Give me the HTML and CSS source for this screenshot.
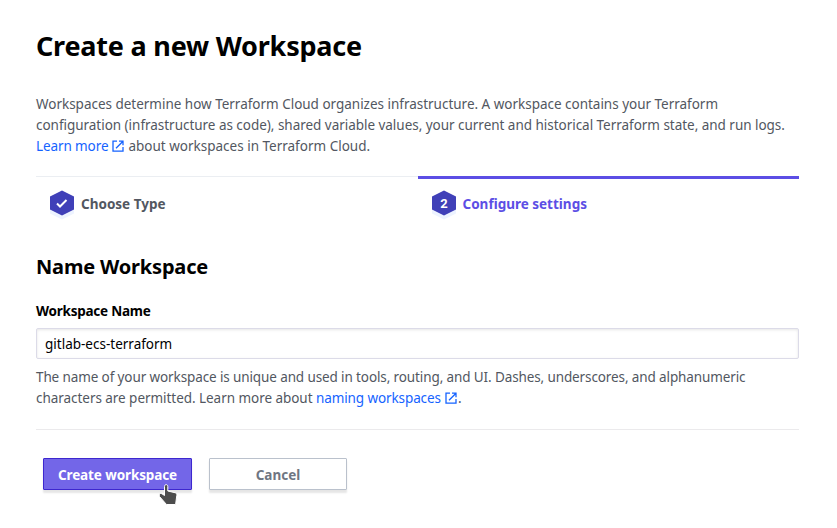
FILE: index.html
```html
<!DOCTYPE html>
<html lang="en">
<head>
<meta charset="utf-8">
<title>Create a new Workspace</title>
<link rel="stylesheet" href="styles.css">
</head>
<body>
<main class="page">
  <h1 class="title">Create a new Workspace</h1>
  <p class="text intro">
    <span class="line intro-one">Workspaces determine how Terraform Cloud organizes infrastructure. A workspace contains your Terraform</span>
    <span class="line intro-two">configuration (infrastructure as code), shared variable values, your current and historical Terraform state, and run logs.</span>
    <span class="line"><a class="link">Learn more<svg class="external" viewBox="0 0 12 12"><path d="M5 1.200H1v10h10V7M7 1.200h4v4M11 1.200 4 8.200"/></svg></a>about workspaces in Terraform Cloud.</span>
  </p>
  <ol class="steps">
    <li class="step">
      <svg class="hexagon" viewBox="0 0 24 30"><path class="hex-shadow" d="M12 4.500 24 11v12.500L12 29.500 0 23.500V11z"/><path class="hex-face" d="M12 .5 24 6.500v13L12 25.500 0 19.500v-13z"/><path class="check" d="m7 13.500 3 3L16.500 10"/></svg>
      <span class="step-label">Choose Type</span>
    </li>
    <li class="step active">
      <svg class="hexagon" viewBox="0 0 24 30"><path class="hex-shadow" d="M12 4.500 24 11v12.500L12 29.500 0 23.500V11z"/><path class="hex-face" d="M12 .5 24 6.500v13L12 25.500 0 19.500v-13z"/><text class="number" x="12" y="17.500">2</text></svg>
      <span class="step-label">Configure settings</span>
    </li>
  </ol>
  <h2 class="subtitle">Name Workspace</h2>
  <label class="label" for="name">Workspace Name</label>
  <input class="input" id="name" type="text" value="gitlab-ecs-terraform">
  <p class="text help">
    <span class="line help-one">The name of your workspace is unique and used in tools, routing, and UI. Dashes, underscores, and alphanumeric</span>
    <span class="line help-two">characters are permitted. Learn more about <a class="link naming">naming workspaces<svg class="external" viewBox="0 0 12 12"><path d="M5 1.200H1v10h10V7M7 1.200h4v4M11 1.200 4 8.200"/></svg></a>.</span>
  </p>
  <div class="actions">
    <button class="button primary">Create workspace</button>
    <button class="button secondary">Cancel</button>
    <svg class="pointer" width="20" height="24" viewBox="0 0 20 24"><path d="M 6.5 3.5 C 6.5 1 9.8 1 9.8 3.5 L 9.8 8 L 17 9.7 C 18.5 10 19 11 18.8 12.5 L 17.6 21.5 L 8.5 21.5 L 1.5 13.5 C 0.5 11 2 10 3.8 10.7 L 6.5 12.5 Z"/></svg>
  </div>
</main>
</body>
</html>
```
FILE: styles.css
```css
* { box-sizing: border-box; }
body { margin: 0; min-height: 528px; background: #fff; font-family: "Noto Sans", "Open Sans", sans-serif; font-size: 13.5px; color: #000; }
.page { width: 763px; margin-left: 36px; padding-top: 26px; }
h1, h2, p, ol { margin: 0; padding: 0; }
.title { font-size: 27px; line-height: 40px; letter-spacing: -.21px; }
.text { line-height: 21px; color: #525761; }
.intro { margin-top: 28px; }
.line { display: block; white-space: nowrap; width: max-content; }
.intro-one { letter-spacing: -.016px; }
.intro-two { letter-spacing: -.03px; }
.link { color: #1563ff; letter-spacing: -.1px; }
.external { width: 12px; height: 12px; margin: 0 4px; vertical-align: -1px; fill: none; stroke: currentColor; stroke-width: 1.3; }
.steps { display: flex; margin-top: 19px; list-style: none; height: 54px; }
.step { display: flex; width: 50%; border-top: 1px solid #ebeef2; padding: 13px 0 0 14px; color: #525761; font-weight: 700; }
.step.active { border-top: 3px solid #5c4ee5; color: #5c4ee5; padding-top: 11px; }
.hexagon { width: 24px; height: 30px; flex: none; }
.hex-shadow { fill: #edf3ff; }
.hex-face { fill: #4040b8; }
.check { fill: none; stroke: #fff; stroke-width: 2; }
.number { fill: #fff; font: 700 13px Roboto, sans-serif; text-anchor: middle; }
.step-label { line-height: 28px; margin-left: 7px; }
.subtitle { font-size: 20px; line-height: 30px; margin-top: 22px; letter-spacing: -.18px; }
.label { display: block; font-weight: 700; line-height: 20px; margin-top: 19px; letter-spacing: -.24px; }
.input { display: block; width: 100%; height: 31px; margin-top: 7px; border: 1px solid #dcdbe8; border-radius: 2px; box-shadow: inset 0 1px 3px #0000001a; padding: 1px 8px 0; font: inherit; color: #000; background: #fff; outline: 0; }
.help { margin-top: 8px; }
.help-one { letter-spacing: -.113px; }
.help-two { letter-spacing: -.045px; }
.naming .external { margin-right: 1px; }
.actions { position: relative; display: flex; gap: 17px; margin-top: 20px; border-top: 1px solid #ebeaec; padding: 28px 0 0 7px; }
.button { height: 32px; padding: 2px 0 0; border-radius: 1px; font: 700 13.5px "Noto Sans", sans-serif; box-shadow: 0 3px 2px #0000001a; }
.primary { width: 149px; background: #7366e8; color: #fff; border: 1px solid #3d27cf; letter-spacing: -.11px; }
.secondary { width: 138px; background: #fff; color: #6f7682; border: 1px solid #bac1cc; }
.pointer { position: absolute; left: 122px; top: 53px; z-index: 2; overflow: visible; }
.pointer path { fill: #4d4d4d; stroke: #fff; stroke-width: 1; }
```
